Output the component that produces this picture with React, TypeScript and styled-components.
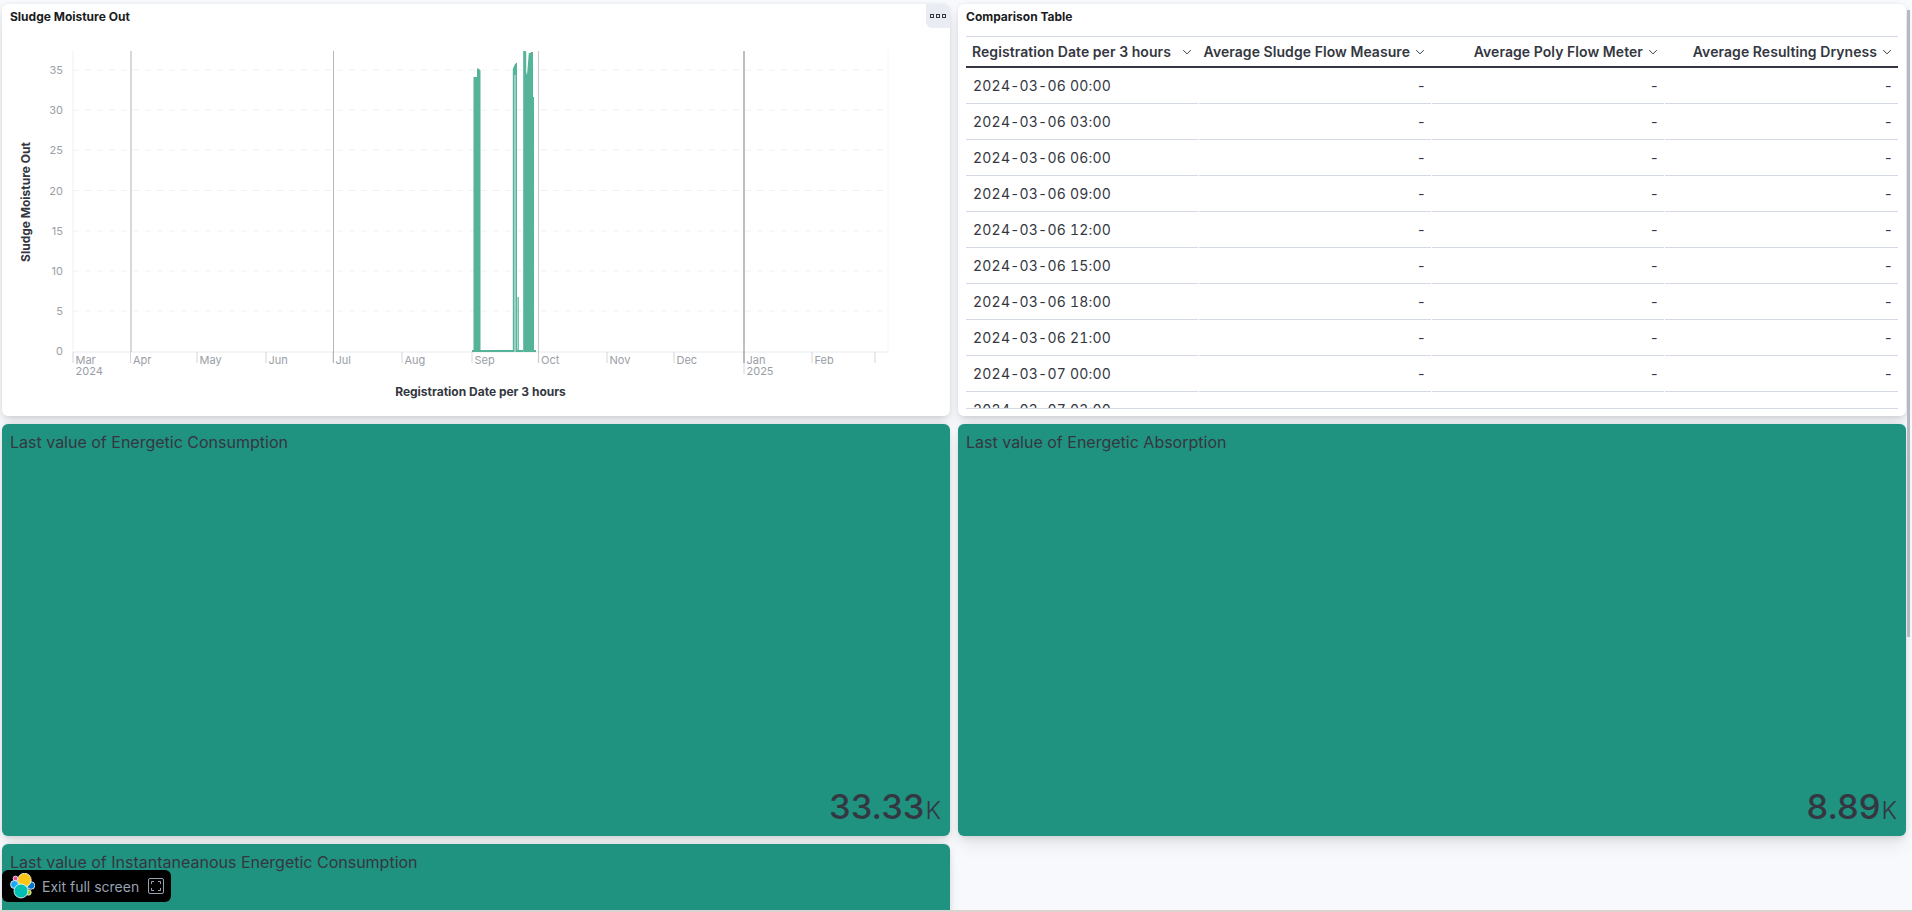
import React from 'react';
import styled, { createGlobalStyle } from 'styled-components';

const GlobalStyle = createGlobalStyle`
  html, body {
    margin: 0;
    padding: 0;
    background: #f8f9fd;
    font-family: Inter, "Noto Sans", sans-serif;
  }
`;

const panelShadow = `
  0 0.9px 4px -1px rgba(0, 0, 0, 0.08),
  0 2.6px 8px -1px rgba(0, 0, 0, 0.06),
  0 5.7px 12px -1px rgba(0, 0, 0, 0.05),
  0 15px 15px -1px rgba(0, 0, 0, 0.04)
`;

// whole viewport, the third row of tiles is cut off by the bottom edge
const Page = styled.div`
  position: relative;
  box-sizing: border-box;
  height: 912px;
  overflow: hidden;
  border-bottom: 2px solid #dcd2cf;
  padding: 4px 0 0 2px;
  display: grid;
  grid-template-columns: 948px 948px;
  grid-auto-rows: 412px;
  gap: 8px;
  align-content: start;
`;

const Panel = styled.section`
  position: relative;
  box-sizing: border-box;
  background: #fff;
  border-radius: 6px;
  box-shadow: ${panelShadow};
  overflow: hidden;
`;

const PanelTitle = styled.h2`
  margin: 0;
  padding: 5px 8px 0;
  height: 32px;
  box-sizing: border-box;
  font-size: 12px;
  line-height: 16px;
  font-weight: 700;
  color: #1a1c21;
`;

const OptionsButton = styled.button`
  position: absolute;
  top: 0;
  right: 0;
  width: 24px;
  height: 24px;
  padding: 0;
  border: none;
  border-bottom-left-radius: 6px;
  background: #e9edf3;
  display: flex;
  align-items: center;
  justify-content: center;
`;

const ChartSvg = styled.svg`
  display: block;
`;

const TickLabel = styled.text`
  font-size: 11px;
  fill: #9a9ea6;
`;

const AxisTitle = styled.text`
  font-size: 12px;
  font-weight: 700;
  fill: #343741;
`;

// table
const TableWrap = styled.div`
  margin: 0 8px;
  height: 371px;
  overflow: hidden;
  border-top: 1px solid #d3dae6;
  border-bottom: 1px solid #d3dae6;
`;

const Row = styled.div<{ $head?: boolean }>`
  display: grid;
  grid-template-columns: 232px 232px 232px 233px;
  column-gap: 1px;
  box-sizing: border-box;
  height: ${p => (p.$head ? '31px' : '36px')};
  border-bottom: ${p => (p.$head ? '2px solid #343741' : 'none')};
`;

const HeadCell = styled.div<{ $left?: boolean }>`
  display: flex;
  align-items: center;
  justify-content: ${p => (p.$left ? 'space-between' : 'flex-end')};
  gap: 4px;
  padding: 0 5px 0 6px;
  box-sizing: border-box;
  font-size: 14px;
  letter-spacing: 0.06px;
  font-weight: 600;
  color: #343741;
  white-space: nowrap;
`;

const Cell = styled.div<{ $right?: boolean }>`
  display: flex;
  align-items: center;
  justify-content: ${p => (p.$right ? 'flex-end' : 'flex-start')};
  padding: ${p => (p.$right ? '0 5px 0 0' : '0 0 0 7px')};
  box-sizing: border-box;
  border-bottom: 1px solid #d3dae6;
  font-size: 14px;
  font-feature-settings: 'tnum';
  letter-spacing: 0.22px;
  color: #343741;
  white-space: nowrap;
`;

// metric tiles
const Tile = styled(Panel)`
  background: #209280;
  color: #343741;
  display: flex;
  flex-direction: column;
  justify-content: space-between;
`;

const TileTitle = styled.div`
  padding: 6px 8px 0;
  font-size: 16px;
  line-height: 24px;
`;

const TileValue = styled.div`
  align-self: flex-end;
  padding: 0 9px 4px 0;
  font-size: 34.500px;
  line-height: 42px;
  font-weight: 500;
  display: flex;
  align-items: baseline;
`;

const TileUnit = styled.span`
  font-size: 24px;
  font-weight: 300;
  margin-left: 1px;
`;

// overlays
const FullscreenBar = styled.div`
  position: absolute;
  left: 2px;
  top: 870px;
  width: 169px;
  height: 32px;
  box-sizing: border-box;
  padding: 0 8px;
  background: #000;
  border-radius: 6px;
  display: flex;
  align-items: center;
  color: #98a2b3;
  font-size: 14px;
  white-space: nowrap;
`;

const BarLabel = styled.span`
  margin: 0 9px 0 7px;
`;

const Scrollbar = styled.div`
  position: absolute;
  left: 1907px;
  top: 10px;
  width: 2.500px;
  height: 627px;
  background: #b5b9c2;
`;

const gridYs: [number, string][] = [
  [351, '0'], [311, '5'], [271, '10'], [231, '15'],
  [190.5, '20'], [150, '25'], [110, '30'], [70, '35'],
];

const ticks: [number, string, string?][] = [
  [73, 'Mar', '2024'], [130.5, 'Apr'], [197, 'May'], [266, 'Jun'], [333, 'Jul'], [402, 'Aug'],
  [472, 'Sep'], [538.5, 'Oct'], [607, 'Nov'], [674, 'Dec'], [744, 'Jan', '2025'], [812, 'Feb'], [875, ''],
];

// viewBox keeps page coordinates, the svg starts right below the panel title
const Chart: React.FC = () => (
  <ChartSvg width={948} height={380} viewBox="2 36 948 380">
    {gridYs.slice(1).map(([y]) => (
      <line key={y} x1={73} x2={886} y1={y} y2={y} stroke="#eef0f3" strokeDasharray="6 6" />
    ))}
    <line x1={73} x2={73} y1={51} y2={352} stroke="#eef0f3" />
    <line x1={73} x2={888} y1={352} y2={352} stroke="#eef0f3" strokeWidth={1.5} />
    <line x1={888} x2={888} y1={51} y2={352} stroke="#f5f6f8" />

    {gridYs.map(([y, label]) => (
      <TickLabel key={label} x={63} y={y + 4} textAnchor="end">{label}</TickLabel>
    ))}

    {ticks.map(([x, month, year]) => (
      <g key={x}>
        <line x1={x} x2={x} y1={352} y2={year === '2025' ? 374 : 363} stroke="#d3d6da" />
        <TickLabel x={x + 2.5} y={364}>{month}</TickLabel>
        {year && <TickLabel x={x + 2.5} y={375}>{year}</TickLabel>}
      </g>
    ))}

    {/* quarter markers */}
    <line x1={131} x2={131} y1={51} y2={352} stroke="#c9cbcf" strokeWidth={1.5} />
    <line x1={333.5} x2={333.5} y1={51} y2={363} stroke="#b4b6ba" />
    <line x1={538.5} x2={538.5} y1={51} y2={363} stroke="#c9cbcf" strokeWidth={1.2} />
    <line x1={744} x2={744} y1={51} y2={363} stroke="#a8aaae" strokeWidth={1.5} />

    {/* sludge moisture series */}
    <path d="M472 351H513M517 351H523M533 351H536" stroke="#54b399" strokeWidth={2} fill="none" />
    <path d="M473.500 352V77H477V68.500H478.500L480.500 70.500V352Z" fill="#54b399" />
    <path d="M512.800 352V69L515 64L517 62.500V352H515.400V75H514.600V352Z" fill="#54b399" />
    <path d="M517.500 352V297H518.800V352Z" fill="#54b399" />
    <path d="M523.200 352V51H525.500L526.200 52V72L527 75L528.800 53H530.500L531 52H533V97H534V352Z" fill="#54b399" />

    <AxisTitle x={480.5} y={396} textAnchor="middle">Registration Date per 3 hours</AxisTitle>
    <AxisTitle transform="translate(30 202) rotate(-90)" textAnchor="middle">Sludge Moisture Out</AxisTitle>
  </ChartSvg>
);

const Chevron: React.FC = () => (
  <svg width="12" height="12" viewBox="0 0 16 16" fill="none" stroke="#343741" strokeWidth="1.300" style={{ flex: 'none' }}>
    <path d="M3 5.500l5 5 5-5" />
  </svg>
);

const OptionsIcon: React.FC = () => (
  <svg width="16" height="4" viewBox="0 0 16 4" fill="none" stroke="#343741">
    <rect x="0.500" y="0.500" width="3" height="3" />
    <rect x="6.500" y="0.500" width="3" height="3" />
    <rect x="12.500" y="0.500" width="3" height="3" />
  </svg>
);

const ElasticLogo: React.FC = () => (
  <svg width="25" height="26" viewBox="0 0 25 26" stroke="#fff" strokeWidth="0.800" style={{ flex: 'none' }}>
    <circle cx="5.500" cy="5.500" r="2.400" fill="#f04e98" />
    <circle cx="4.500" cy="11.500" r="4" fill="#1ba9f5" />
    <circle cx="21" cy="12.500" r="3.800" fill="#0077cc" />
    <circle cx="18.500" cy="19.500" r="2.700" fill="#93c90e" />
    <circle cx="14.500" cy="7" r="6.700" fill="#fec514" />
    <circle cx="11" cy="18" r="7" fill="#00bfb3" />
  </svg>
);

const ExitIcon: React.FC = () => (
  <svg width="16" height="16" viewBox="0 0 16 16" fill="none" stroke="#98a2b3" style={{ flex: 'none' }}>
    <rect x="0.500" y="0.500" width="15" height="15" rx="1.500" />
    <path d="M3.500 6V3.500H6M10 3.500h2.500V6M12.500 10v2.500H10M6 12.500H3.500V10" />
  </svg>
);

const dates = [
  '2024-03-06 00:00', '2024-03-06 03:00', '2024-03-06 06:00', '2024-03-06 09:00', '2024-03-06 12:00',
  '2024-03-06 15:00', '2024-03-06 18:00', '2024-03-06 21:00', '2024-03-07 00:00', '2024-03-07 03:00',
];

const columns = ['Average Sludge Flow Measure', 'Average Poly Flow Meter', 'Average Resulting Dryness'];

const App: React.FC = () => (
  <Page>
    <GlobalStyle />
    <Panel>
      <PanelTitle>Sludge Moisture Out</PanelTitle>
      <Chart />
      <OptionsButton aria-label="Panel options"><OptionsIcon /></OptionsButton>
    </Panel>

    <Panel>
      <PanelTitle>Comparison Table</PanelTitle>
      <TableWrap>
        <Row $head>
          <HeadCell $left>Registration Date per 3 hours <Chevron /></HeadCell>
          {columns.map(c => (
            <HeadCell key={c}>{c} <Chevron /></HeadCell>
          ))}
        </Row>
        {dates.map(d => (
          <Row key={d}>
            <Cell>{d}</Cell>
            <Cell $right>-</Cell>
            <Cell $right>-</Cell>
            <Cell $right>-</Cell>
          </Row>
        ))}
      </TableWrap>
    </Panel>

    <Tile>
      <TileTitle>Last value of Energetic Consumption</TileTitle>
      <TileValue>33.33<TileUnit>K</TileUnit></TileValue>
    </Tile>
    <Tile>
      <TileTitle>Last value of Energetic Absorption</TileTitle>
      <TileValue>8.89<TileUnit>K</TileUnit></TileValue>
    </Tile>
    <Tile>
      <TileTitle>Last value of Instantaneanous Energetic Consumption</TileTitle>
    </Tile>

    <Scrollbar />
    <FullscreenBar>
      <ElasticLogo />
      <BarLabel>Exit full screen</BarLabel>
      <ExitIcon />
    </FullscreenBar>
  </Page>
);

export default App;
